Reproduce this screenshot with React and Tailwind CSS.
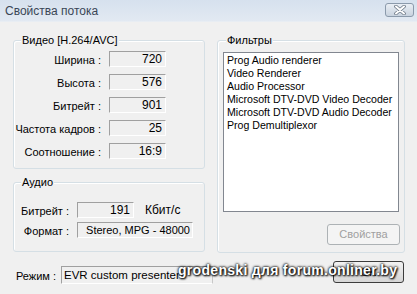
export default function App() {
  const box =
    "h-[16px] border-t border-l border-t-[#a0a0a0] border-l-[#a0a0a0] border-b border-r border-b-white border-r-white text-right pr-[3px] text-[12px] leading-[14px] whitespace-nowrap";
  const videoRows = [
    ["Ширина :", "720"],
    ["Высота :", "576"],
    ["Битрейт :", "901"],
    ["Частота кадров :", "25"],
    ["Соотношение :", "16:9"],
  ];
  const filters = [
    "Prog Audio renderer",
    "Video Renderer",
    "Audio Processor",
    "Microsoft DTV-DVD Video Decoder",
    "Microsoft DTV-DVD Audio Decoder",
    "Prog Demultiplexor",
  ];
  return (
    <div className="relative w-[417px] h-[294px] overflow-hidden bg-[#f0f0f0] font-['Liberation_Sans',Arial,sans-serif] text-[11px] text-black">
      {/* title bar */}
      <div className="h-[22px] flex items-start justify-between pl-[5px] pr-[3px] bg-gradient-to-b from-[#d6e1ee] to-[#e2e9f2] border-b border-[#e8edf3]">
        <span className="mt-[3px] text-[12px] leading-[16px] text-[#3a4656]">Свойства потока</span>
        <div className="mt-[3px] w-[29px] h-[14px] rounded-[3px] border border-[#8b9aab] bg-gradient-to-b from-[#e9eef4] to-[#c9d3df] flex items-center justify-center">
          <svg width="12" height="10" viewBox="0 0 12 10">
            <path d="M2 1.5 L10 8.5 M10 1.5 L2 8.5" stroke="#6b7785" strokeWidth="3.6" strokeLinecap="round" />
            <path d="M2 1.5 L10 8.5 M10 1.5 L2 8.5" stroke="#ffffff" strokeWidth="2" strokeLinecap="round" />
          </svg>
        </div>
      </div>

      <div className="flex gap-[12px] pl-[13px] pr-[12px] pt-[18px]">
        {/* left column */}
        <div className="w-[193px] flex flex-col gap-[13px]">
          <div className="relative h-[129px] rounded-[3px] border border-[#d5dfe5] shadow-[inset_1px_1px_0_#fff] pt-[10px]">
            <span className="absolute -top-[7px] left-[7px] px-[1px] bg-[#f0f0f0] leading-[13px]">Видео [H.264/AVC]</span>
            <div className="grid grid-cols-[87px_57px] gap-x-[8px] gap-y-[6px]">
              {videoRows.map(([l, v]) => (
                <div key={l} className="contents">
                  <div className="text-right leading-[16px] pt-[1px]">{l}</div>
                  <div className={box}>{v}</div>
                </div>
              ))}
            </div>
          </div>
          <div className="relative h-[70px] rounded-[3px] border border-[#d5dfe5] shadow-[inset_1px_1px_0_#fff] pt-[19px]">
            <span className="absolute -top-[7px] left-[7px] px-[1px] bg-[#f0f0f0] leading-[13px]">Аудио</span>
            <div className="flex flex-col gap-[3px]">
              <div className="flex items-start">
                <div className="w-[55px] text-right leading-[16px] pt-[1px]">Битрейт :</div>
                <div className={box + " ml-[8px] w-[57px]"}>191</div>
                <div className="ml-[11px] leading-[16px] text-[12px]">Кбит/с</div>
              </div>
              <div className="flex items-start">
                <div className="w-[55px] text-right leading-[16px] pt-[1px]">Формат :</div>
                <div className="ml-[8px] w-[116px] h-[16px] border-t border-l border-t-[#a0a0a0] border-l-[#a0a0a0] border-b border-r border-b-white border-r-white text-right pr-[2px] text-[11px] leading-[14px] whitespace-nowrap">
                  Stereo, MPG - 48000
                </div>
              </div>
            </div>
          </div>
        </div>

        {/* right column */}
        <div className="relative w-[188px] h-[213px] rounded-[3px] border border-[#d5dfe5] shadow-[inset_1px_1px_0_#fff] pt-[11px] px-[5px] flex flex-col">
          <span className="absolute -top-[7px] left-[8px] px-[1px] bg-[#f0f0f0] leading-[13px]">Фильтры</span>
          <div className="h-[160px] w-[176px] border border-[#828790] bg-white pl-[3px] pt-[1px] leading-[13px] text-[10.6px] overflow-hidden">
            {filters.map((f) => (
              <div key={f} className="whitespace-nowrap">{f}</div>
            ))}
          </div>
          <div className="self-end mr-[-1px] mt-[12px] w-[73px] h-[21px] rounded-[3px] border border-[#adb2b5] bg-[#f4f4f4] flex items-center justify-center text-[#a0a0a0] text-[11px]">
            Свойства
          </div>
        </div>
      </div>

      {/* bottom row */}
      <div className="flex items-start mt-[8px] pl-[16px] pr-[13px]">
        <div className="mt-[9px] leading-[13px]">Режим :</div>
        <div className="ml-[5px] mt-[5px] w-[152px] h-[18px] border-t border-l border-t-[#a0a0a0] border-l-[#a0a0a0] border-b border-r border-b-white border-r-[#c8c8c8] pl-[2px] leading-[16px] text-[11.5px] whitespace-nowrap">
          EVR custom presenter
        </div>
        <div className="ml-auto w-[71px] h-[22px] rounded-[3px] border border-[#3c3c3c] bg-gradient-to-b from-[#f2f2f2] to-[#d6d6d6] flex items-center justify-center text-[11px]">
          OK
        </div>
      </div>

      {/* watermark */}
      <div className="absolute left-[178px] top-[262px] text-[14px] leading-[17px] font-bold text-white tracking-[0.3px] whitespace-nowrap [text-shadow:0_0_2px_#000,0_0_3px_#000,1px_1px_2px_#000]">
        grodenski для forum.onliner.by
      </div>
    </div>
  );
}
